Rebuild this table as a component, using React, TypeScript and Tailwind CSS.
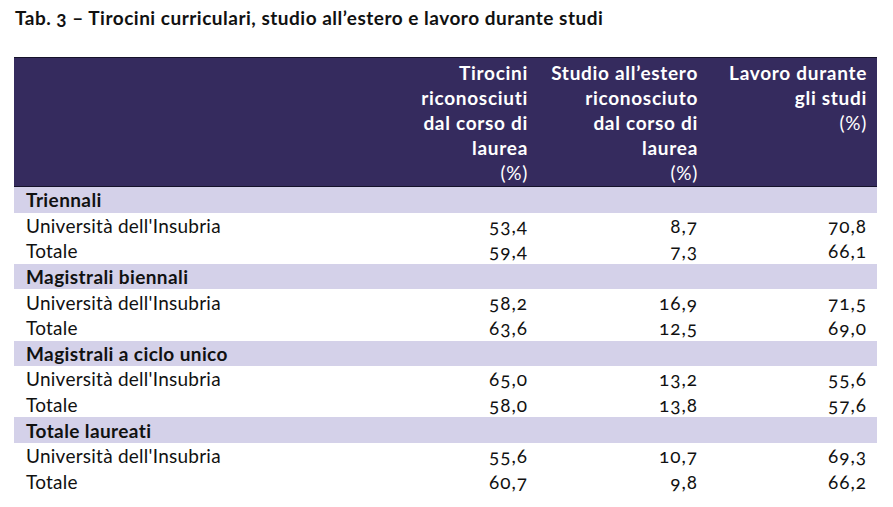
import React from 'react';

type Row = { label: string; values?: [string, string, string]; group?: boolean };

const rows: Row[] = [
  { label: 'Triennali', group: true },
  { label: "Università dell'Insubria", values: ['53,4', '8,7', '70,8'] },
  { label: 'Totale', values: ['59,4', '7,3', '66,1'] },
  { label: 'Magistrali biennali', group: true },
  { label: "Università dell'Insubria", values: ['58,2', '16,9', '71,5'] },
  { label: 'Totale', values: ['63,6', '12,5', '69,0'] },
  { label: 'Magistrali a ciclo unico', group: true },
  { label: "Università dell'Insubria", values: ['65,0', '13,2', '55,6'] },
  { label: 'Totale', values: ['58,0', '13,8', '57,6'] },
  { label: 'Totale laureati', group: true },
  { label: "Università dell'Insubria", values: ['55,6', '10,7', '69,3'] },
  { label: 'Totale', values: ['60,7', '9,8', '66,2'] },
];

const grid = 'grid grid-cols-[344px_179px_171px_169px]';

export default function App() {
  return (
    <div className="w-[893px] h-[507px] bg-white text-[#111] font-['Lato','Noto_Sans',sans-serif] oldstyle-nums overflow-hidden">
      {/* Title */}
      <h1 className="pl-[15px] pt-[6px] h-[57px] text-[19px] leading-[24px] tracking-[0.5px] font-bold">
        Tab. 3 – Tirocini curriculari, studio all’estero e lavoro durante studi
      </h1>

      <div className="ml-[14px] w-[863px]">
        {/* Header */}
        <div className={`${grid} h-[130px] bg-[#352b5e] border-t border-b border-[#15122a] text-white font-bold text-[19px] leading-[25px] tracking-[0.7px]`}>
          <div />
          <div className="pt-[2px] pr-[9px] text-right">
            Tirocini
            <br />
            riconosciuti
            <br />
            dal corso di
            <br />
            laurea
            <br />
            <span className="font-normal">(%)</span>
          </div>
          <div className="pt-[2px] pr-[10px] text-right">
            Studio all’estero
            <br />
            riconosciuto
            <br />
            dal corso di
            <br />
            laurea
            <br />
            <span className="font-normal">(%)</span>
          </div>
          <div className="pt-[2px] pr-[10px] text-right">
            Lavoro durante
            <br />
            gli studi
            <br />
            <span className="font-normal">(%)</span>
          </div>
        </div>

        {/* Body */}
        {rows.map((r, i) => (
          <div
            key={i}
            className={`${grid} h-[25.6px] items-center text-[19px] leading-[25px] ${r.group ? 'bg-[#d4d1e9] font-bold tracking-[0.4px]' : 'tracking-[0.25px]'}`}
          >
            <div className="pl-[12px] whitespace-nowrap">{r.label}</div>
            {r.values && (
              <>
                <div className="pr-[9px] text-right tracking-[1px]">{r.values[0]}</div>
                <div className="pr-[10px] text-right tracking-[1px]">{r.values[1]}</div>
                <div className="pr-[10px] text-right tracking-[1px]">{r.values[2]}</div>
              </>
            )}
          </div>
        ))}
      </div>
    </div>
  );
}
